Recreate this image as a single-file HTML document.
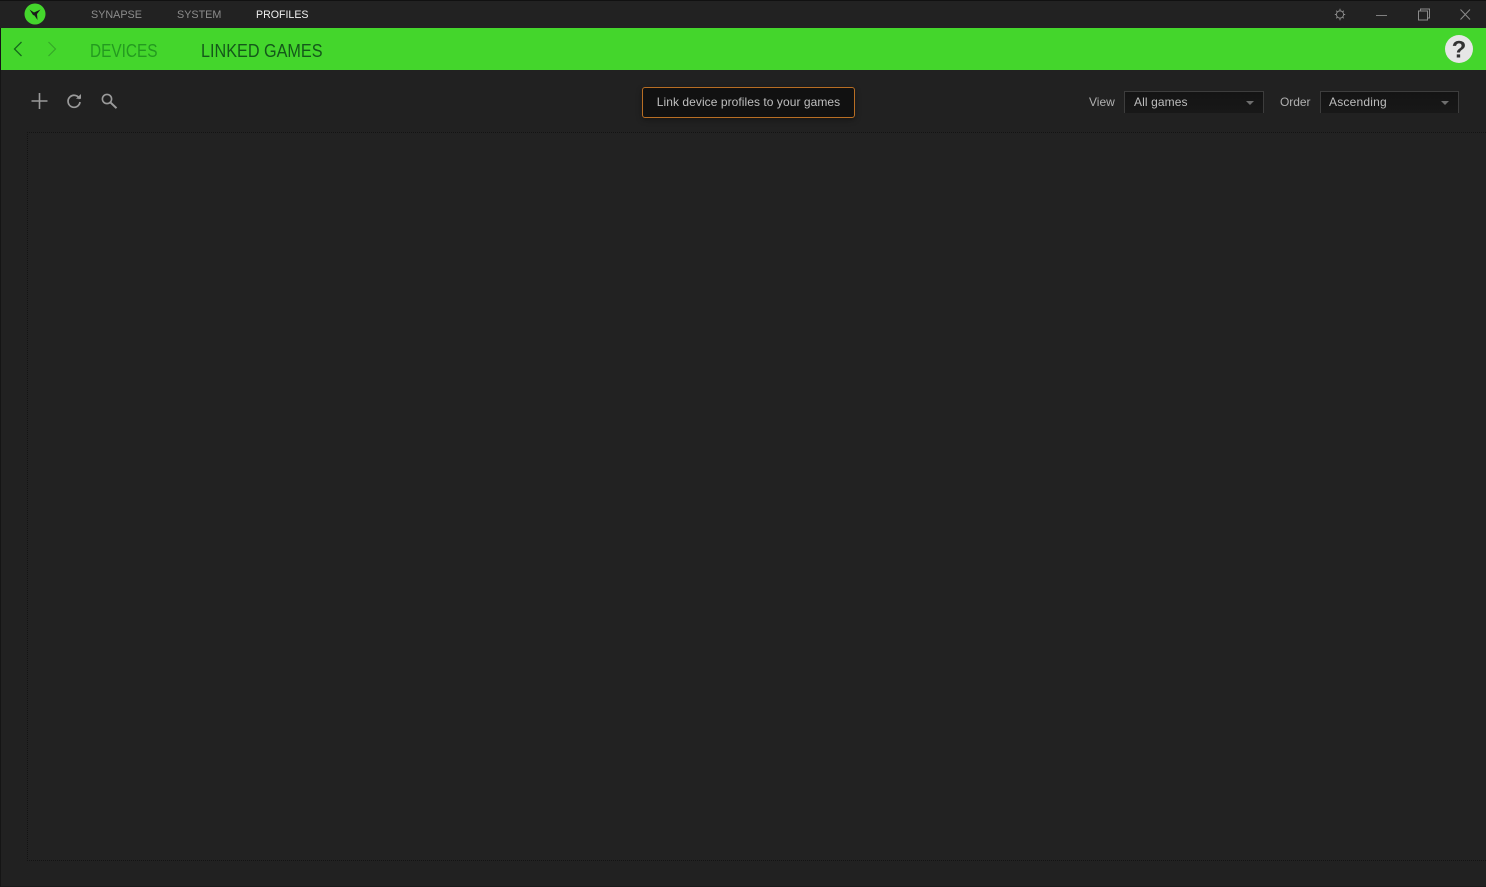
<!DOCTYPE html>
<html><head><meta charset="utf-8"><style>
*{box-sizing:border-box}
html,body{margin:0;padding:0;width:1486px;height:887px;overflow:hidden;background:#212121;font-family:"Liberation Sans",sans-serif}
.a{position:absolute;white-space:nowrap}
svg{position:absolute;overflow:visible}
.dd{position:absolute;top:91px;height:22px;background:linear-gradient(#141414,#181818);border:1px solid #3d3d3d;border-bottom:none;color:#bdbdbd;font-size:12px;line-height:20px;padding-left:9px}
.dd i{position:absolute;right:9px;top:9px;width:0;height:0;border-left:4.5px solid transparent;border-right:4.5px solid transparent;border-top:4.5px solid #6e6e6e}
</style></head><body>
<div class="a" style="left:0;top:0;width:1486px;height:887px;border-left:1px solid #151515;border-bottom:1px solid #1a1a1a"></div>
<div class="a" style="left:0;top:0;width:1486px;height:28px;background:#222;border-top:1px solid #111"></div>
<div class="a" style="left:1px;top:28px;width:1485px;height:42px;background:#44d62c"></div>

<svg style="left:24px;top:3px" width="22" height="22" viewBox="0 0 22 22"><circle cx="11" cy="11" r="10.5" fill="#44d62c"/><path d="M5.5 6.5L10 9.5L16.5 6.5L13 11L13.5 17L10.5 12.5L9 12Z" fill="#1a1a1a"/></svg>
<div class="a" style="left:91px;top:9px;font-size:11px;line-height:13px;color:#8c8c8c;transform-origin:0 0;transform:scaleX(.98)">SYNAPSE</div>
<div class="a" style="left:177px;top:9px;font-size:11px;line-height:13px;color:#8c8c8c;transform-origin:0 0;transform:scaleX(.98)">SYSTEM</div>
<div class="a" style="left:256px;top:9px;font-size:11px;line-height:13px;color:#f0f0f0;transform-origin:0 0;transform:scaleX(.965)">PROFILES</div>

<svg style="left:1334px;top:8px" width="12" height="13" viewBox="0 0 12 13" fill="none" stroke="#8a8a8a" stroke-width="1"><circle cx="6" cy="6.5" r="3.6"/><path d="M6 .8V2.6M6 10.4V12.2M.8 6.5H2.4M9.6 6.5H11.2M2.2 2.7L3.4 3.9M8.6 9.1L9.8 10.3M9.8 2.7L8.6 3.9M3.4 9.1L2.2 10.3"/></svg>
<div class="a" style="left:1376px;top:15px;width:11px;height:1px;background:#808080"></div>
<svg style="left:1418px;top:8px" width="12" height="13" viewBox="0 0 12 13" fill="none" stroke="#8a8a8a" stroke-width="1"><rect x=".5" y="3" width="9" height="9"/><path d="M2.5 3V1H11.5V10H9.5"/></svg>
<svg style="left:1460px;top:9px" width="11" height="11" viewBox="0 0 11 11" fill="none" stroke="#8a8a8a" stroke-width="1"><path d="M.5.5L10 10.5M10 .5L.5 10.5"/></svg>

<svg style="left:13px;top:41px" width="10" height="16" viewBox="0 0 10 16" fill="none" stroke="#15691c" stroke-width="1.3"><path d="M8.5 1L1.5 8L8.5 15"/></svg>
<svg style="left:47px;top:41px" width="10" height="16" viewBox="0 0 10 16" fill="none" stroke="#35a828" stroke-width="1.2"><path d="M1.5 1L8.5 8L1.5 15"/></svg>
<div class="a" style="left:90px;top:41px;font-size:18px;line-height:21px;color:#249a20;transform-origin:0 0;transform:scaleX(.855)">DEVICES</div>
<div class="a" style="left:201px;top:41px;font-size:18px;line-height:21px;color:#14581a;transform-origin:0 0;transform:scaleX(.9)">LINKED GAMES</div>
<svg style="left:1445px;top:35px" width="28" height="28" viewBox="0 0 28 28"><circle cx="14" cy="14" r="14" fill="#e6e6e6"/><text x="14" y="22.5" text-anchor="middle" font-family="Liberation Sans" font-weight="bold" font-size="24" fill="#333">?</text></svg>

<svg style="left:31px;top:93px" width="17" height="16" viewBox="0 0 17 16" stroke="#9a9a9a" stroke-width="1.6" fill="none"><path d="M8.5 0V16M.5 8H16.5"/></svg>
<svg style="left:66px;top:93px" width="16" height="16" viewBox="0 0 16 16" fill="none" stroke="#9a9a9a" stroke-width="1.7"><path d="M13.6 6A6 6 0 1 0 14 9"/><path d="M10 5.8H15V1Z" fill="#9a9a9a" stroke="none"/></svg>
<svg style="left:101px;top:93px" width="17" height="16" viewBox="0 0 17 16" fill="none" stroke="#9a9a9a" stroke-width="1.6"><circle cx="6" cy="6" r="4.6"/><path d="M9.5 9.5L15.5 15.2" stroke-width="2"/></svg>

<div class="a" style="left:642px;top:87px;width:213px;height:31px;background:#111;border:1px solid #b86e24;border-radius:3px;box-shadow:0 2px 6px rgba(0,0,0,.35);color:#bfbfbf;font-size:12px;line-height:29px;text-align:center;letter-spacing:.06px">Link device profiles to your games</div>

<div class="a" style="left:1089px;top:95px;font-size:12px;line-height:14px;color:#b0b0b0">View</div>
<div class="dd" style="left:1124px;width:140px;letter-spacing:.1px">All games<i></i></div>
<div class="a" style="left:1280px;top:95px;font-size:12px;line-height:14px;color:#b0b0b0;letter-spacing:-.05px">Order</div>
<div class="dd" style="left:1320px;width:139px;padding-left:8px;letter-spacing:.2px">Ascending<i></i></div>

<div class="a" style="left:27px;top:132px;width:1459px;height:729px;border:1px dotted #131313;border-right:none;background:#222"></div>
</body></html>
